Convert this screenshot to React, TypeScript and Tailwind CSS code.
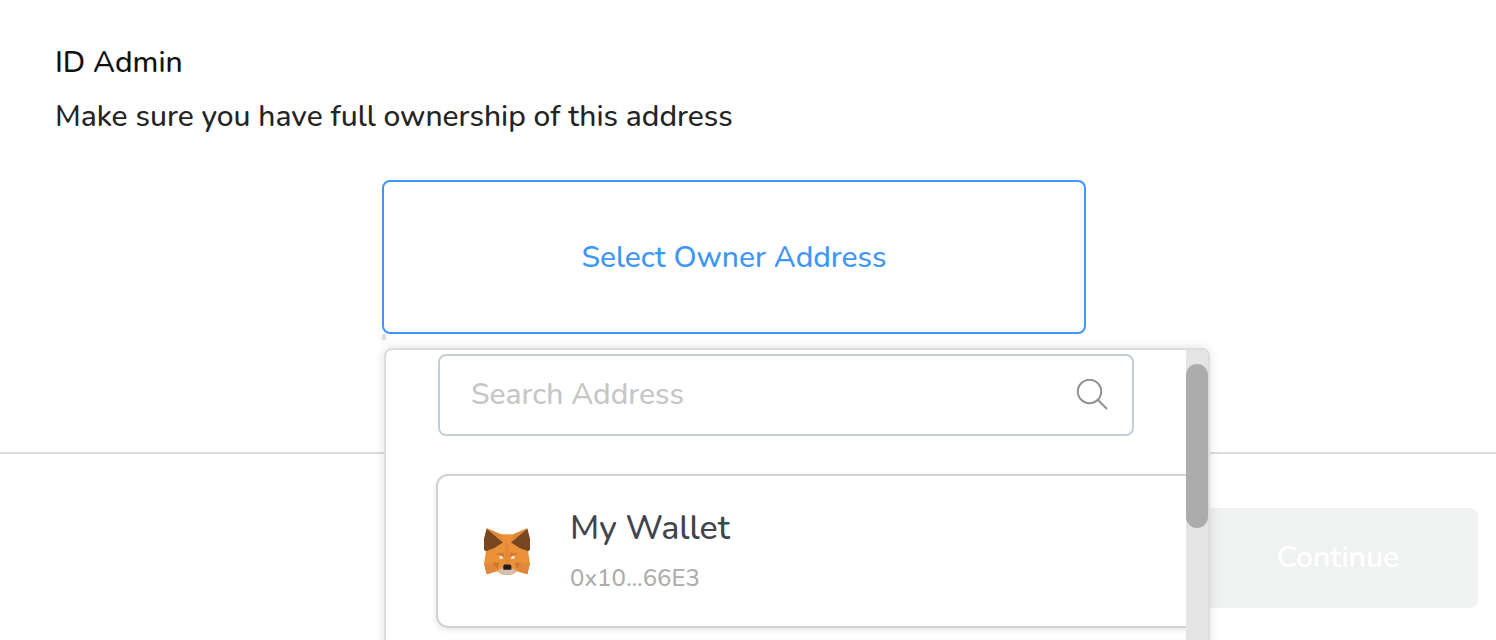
function FoxLogo() {
  return (
    <svg viewBox="0 0 138 140" className="h-[47px] w-[46px] shrink-0" aria-hidden="true">
      <path d="M8 0 50 18H88L130 0 137 32 132 68 138 106 130 138 98 129 86 138Q69 142 52 138L40 129 8 138 0 106 6 68 1 32Z" fill="#eb9239" />
      <path d="M8 2 57 43 30 60 5 69 0 64V32Z" fill="#784721" />
      <path d="M130 2 81 43 108 60 133 69 138 64V32Z" fill="#784721" />
      <path d="M8 0 52 19 57 42ZM130 0 86 19 81 42Z" fill="#e08a37" />
      <path d="M62 48H76L74 108H64Z" fill="#e38938" />
      <path d="M32 76 60 73 61 94 55 84ZM106 76 78 73 77 94 83 84Z" fill="#d27a33" />
      <path d="M0 106H28L40 128 8 138ZM138 106H110L98 128 130 138Z" fill="#e0873c" />
      <path d="M26 103H46L40 124ZM112 103H92L98 124Z" fill="#cc7732" />
      <path d="M42 126 60 118H78L96 126 86 137Q69 142 52 137Z" fill="#cfc1b5" />
      <path d="M44 86 53 83 59 91 48 92ZM94 86 85 83 79 91 90 92Z" fill="#f5e9de" />
      <path d="M61 109H78L82 113V125H58V113Z" fill="#211d19" />
    </svg>
  );
}

function SearchIcon() {
  return (
    <svg viewBox="0 0 32 32" className="size-8 shrink-0" fill="none" stroke="#909090" strokeWidth="2" aria-hidden="true">
      <circle cx="13.5" cy="12.5" r="11.7" />
      <path d="m22 21 9 9" />
    </svg>
  );
}

function AddressMenu() {
  return (
    <div className="absolute top-[168px] left-0.5 flex h-80 w-[826px] overflow-hidden rounded-lg border-2 border-[#dcdcdc] bg-white shadow-[0_0_12px_rgba(0,0,0,0.12)]">
      <div className="min-w-0 flex-1 overflow-hidden pt-1 pl-[50px]">
        <label className="mr-[52px] ml-0.5 flex h-[82px] items-center rounded-lg border-2 border-[#c3ced8] pr-6 pl-[31px]">
          <input
            type="text"
            aria-label="Search Address"
            placeholder="Search Address"
            className="h-12 min-w-0 flex-1 bg-transparent pb-0.5 text-[30px] font-medium text-[#444] outline-none placeholder:text-[#c6c6c6]"
          />
          <SearchIcon />
        </label>
        <button
          type="button"
          className="mt-[38px] flex h-[154px] w-[calc(100%+24px)] items-center gap-10 rounded-xl border-2 border-[#d2d2d2] pl-[46px] text-left shadow-[0_2px_6px_rgba(0,0,0,0.1)]"
        >
          <FoxLogo />
          <span className="flex flex-col gap-0.5 pt-1">
            <span className="text-[34px] leading-[48px] font-medium text-[#41444c]">My Wallet</span>
            <span className="text-2xl leading-[48px] font-medium text-[#adadad]">0x10...66E3</span>
          </span>
        </button>
      </div>
      <div className="w-[22px] bg-[#e4e4e4] pt-3.5" aria-hidden="true">
        <div className="h-[164px] rounded-full bg-[#acacac]" />
      </div>
    </div>
  );
}

export default function App() {
  return (
    <div className="h-screen overflow-hidden bg-white font-['Nunito','Lato',sans-serif]">
      <main className="border-b-2 border-[#dddddd] pt-9 pr-7 pb-[118px]">
        <div className="pl-[55px]">
          <h1 className="text-[30px] leading-[54px] font-medium text-[#111111]">ID Admin</h1>
          <p className="text-[30px] leading-[54px] font-medium text-[#242424]">
            Make sure you have full ownership of this address
          </p>
        </div>
        <div className="relative mx-auto mt-9 w-[704px]">
          <button
            type="button"
            aria-expanded="true"
            className="flex h-[154px] w-full items-center justify-center rounded-lg border-2 border-[#4096f7] pt-0.5 text-[30px] leading-10 font-medium text-[#4096f7]"
          >
            Select Owner Address
          </button>
          <span className="absolute top-full left-0 h-1.5 w-1 rounded-full bg-[#dcdcdc] shadow-[0_2px_6px_rgba(0,0,0,0.12)]" />
          <AddressMenu />
        </div>
      </main>
      <footer className="flex justify-end pt-[54px] pr-[18px]">
        <button
          type="button"
          disabled
          className="h-[100px] w-[280px] rounded-lg bg-[#f0f2f1] text-[30px] leading-10 font-semibold text-white"
        >
          Continue
        </button>
      </footer>
    </div>
  );
}
